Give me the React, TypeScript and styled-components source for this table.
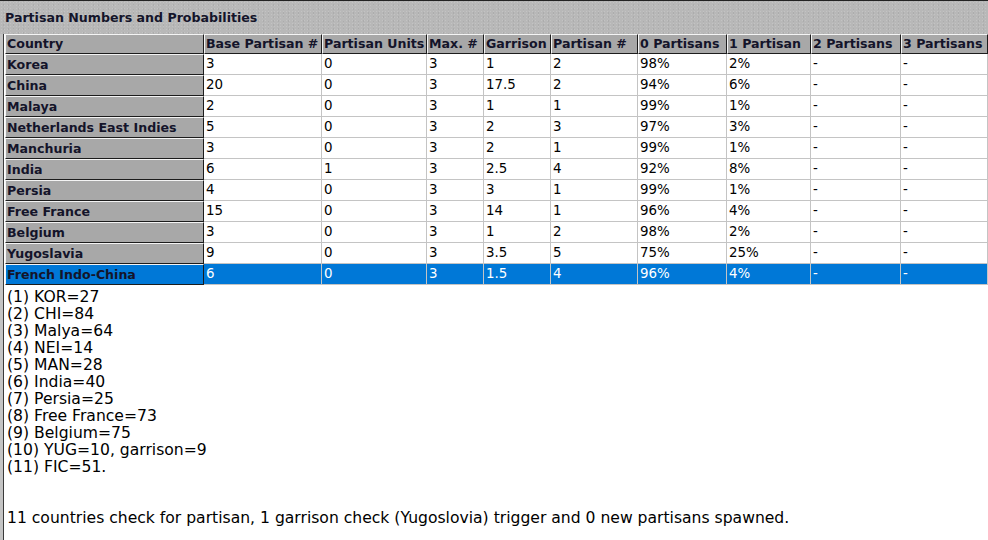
import React from "react";
import styled, { createGlobalStyle } from "styled-components";

const Global = createGlobalStyle`
  html, body { margin: 0; padding: 0; background: #fff; }
  body { font-family: "DejaVu Sans", Verdana, sans-serif; color: #000; }
`;

const Frame = styled.div`
  display: flex;
  width: 988px;
  height: 540px;
  overflow: hidden;
  background: #fff;
`;

const LeftEdge = styled.div`
  width: 4px;
  flex: none;
  background: linear-gradient(to bottom, #b7b7b7 0 10px, transparent 10px),
    linear-gradient(to right, #c4c4c4 0 3px, #3a3a3a 3px 4px);
`;

const Main = styled.div`
  flex: 1;
  display: flex;
  flex-direction: column;
  min-width: 0;
`;

const TitleBar = styled.div`
  height: 34px;
  flex: none;
  display: flex;
  align-items: center;
  margin-left: -4px;
  padding-left: 5px;
  padding-bottom: 1px;
  background-color: #b8b8b8;
  background-image: radial-gradient(rgba(255,255,255,0.16) 0.6px, transparent 0.9px),
    radial-gradient(rgba(0,0,0,0.07) 0.6px, transparent 0.9px);
  background-size: 3px 3px, 5px 4px;
  background-position: 0 0, 1px 2px;
  border-top: 1px solid #222;
  box-sizing: border-box;
  font-weight: bold;
  font-size: 12.6px;
  color: #14142a;
`;

const Grid = styled.div`
  display: grid;
  grid-template-columns: 199px 118px 105px 57px 67px 87px 89px 84px 90px 1fr;
  margin-left: 1px;
`;

const HeadCell = styled.div`
  height: 20px;
  box-sizing: border-box;
  background: #a8a8a8;
  border-top: 1px solid #f4f4f4;
  border-left: 1px solid #f4f4f4;
  border-right: 1px solid #1c1c1c;
  border-bottom: 1px solid #1c1c1c;
  font-size: 12.6px;
  font-weight: bold;
  color: #14142a;
  line-height: 18px;
  padding-left: 1px;
  white-space: nowrap;
  overflow: hidden;
`;

const RowHead = styled.div<{ $sel?: boolean }>`
  height: 21px;
  box-sizing: border-box;
  background: ${(p) => (p.$sel ? "#0078d7" : "#a8a8a8")};
  border-top: 1px solid #f4f4f4;
  border-left: 1px solid #f4f4f4;
  border-right: 1px solid #1c1c1c;
  border-bottom: 1px solid #1c1c1c;
  font-size: 12.6px;
  font-weight: bold;
  color: #14142a;
  line-height: 19px;
  padding-left: 1px;
  white-space: nowrap;
  overflow: hidden;
`;

const Cell = styled.div<{ $sel?: boolean }>`
  height: 21px;
  box-sizing: border-box;
  background: ${(p) => (p.$sel ? "#0078d7" : "#fff")};
  color: ${(p) => (p.$sel ? "#fff" : "#000")};
  border-right: 1px solid #c4c4c4;
  border-bottom: 1px solid #c4c4c4;
  font-size: 13.4px;
  line-height: 20px;
  padding-left: 2px;
  white-space: nowrap;
  overflow: hidden;
`;

const Notes = styled.div`
  padding: 4px 0 0 3px;
  font-size: 15.6px;
  line-height: 17px;
  color: #000;
`;

const Line = styled.div`
  height: 17px;
  white-space: pre;
`;

const headers = [
  "Country",
  "Base Partisan #",
  "Partisan Units",
  "Max. #",
  "Garrison",
  "Partisan #",
  "0 Partisans",
  "1 Partisan",
  "2 Partisans",
  "3 Partisans",
];

const rows: string[][] = [
  ["Korea", "3", "0", "3", "1", "2", "98%", "2%", "-", "-"],
  ["China", "20", "0", "3", "17.5", "2", "94%", "6%", "-", "-"],
  ["Malaya", "2", "0", "3", "1", "1", "99%", "1%", "-", "-"],
  ["Netherlands East Indies", "5", "0", "3", "2", "3", "97%", "3%", "-", "-"],
  ["Manchuria", "3", "0", "3", "2", "1", "99%", "1%", "-", "-"],
  ["India", "6", "1", "3", "2.5", "4", "92%", "8%", "-", "-"],
  ["Persia", "4", "0", "3", "3", "1", "99%", "1%", "-", "-"],
  ["Free France", "15", "0", "3", "14", "1", "96%", "4%", "-", "-"],
  ["Belgium", "3", "0", "3", "1", "2", "98%", "2%", "-", "-"],
  ["Yugoslavia", "9", "0", "3", "3.5", "5", "75%", "25%", "-", "-"],
  ["French Indo-China", "6", "0", "3", "1.5", "4", "96%", "4%", "-", "-"],
];

const notes = [
  "(1) KOR=27",
  "(2) CHI=84",
  "(3) Malya=64",
  "(4) NEI=14",
  "(5) MAN=28",
  "(6) India=40",
  "(7) Persia=25",
  "(8) Free France=73",
  "(9) Belgium=75",
  "(10) YUG=10, garrison=9",
  "(11) FIC=51.",
  "",
  "",
  "11 countries check for partisan, 1 garrison check (Yugoslovia) trigger and 0 new partisans spawned.",
];

export default function App() {
  return (
    <>
      <Global />
      <Frame>
        <LeftEdge />
        <Main>
          <TitleBar>Partisan Numbers and Probabilities</TitleBar>
          <Grid>
            {headers.map((h) => (
              <HeadCell key={h}>{h}</HeadCell>
            ))}
            {rows.map((r, i) => {
              const sel = i === rows.length - 1;
              return (
                <React.Fragment key={r[0]}>
                  <RowHead $sel={sel}>{r[0]}</RowHead>
                  {r.slice(1).map((c, j) => (
                    <Cell key={j} $sel={sel}>
                      {c}
                    </Cell>
                  ))}
                </React.Fragment>
              );
            })}
          </Grid>
          <Notes>
            {notes.map((n, i) => (
              <Line key={i}>{n}</Line>
            ))}
          </Notes>
        </Main>
      </Frame>
    </>
  );
}
